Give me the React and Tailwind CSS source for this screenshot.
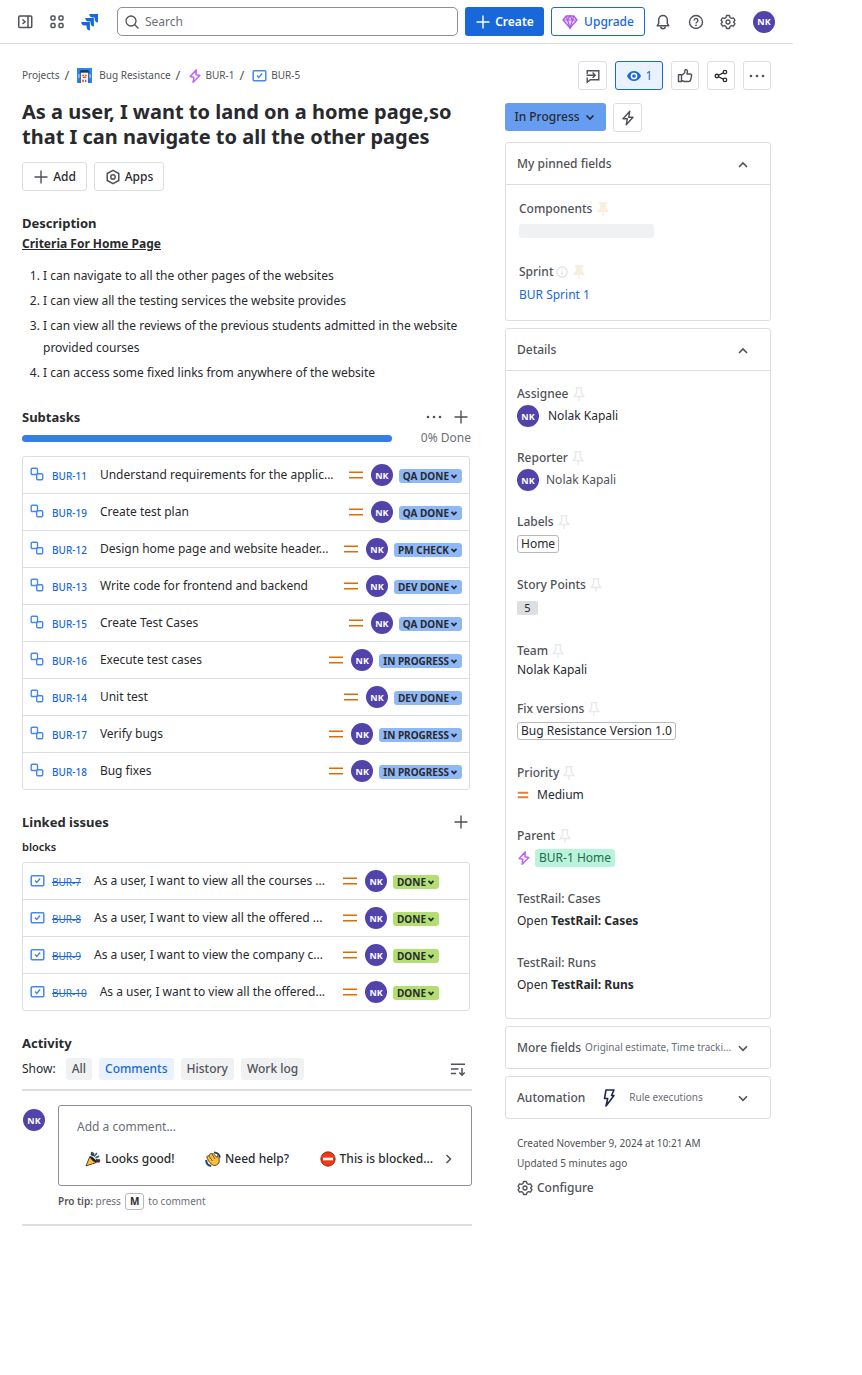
import React from "react";

function Icon({ children, size = "size-4", box = "0 0 16 16", className = "" }) {
  return (
    <svg
      viewBox={box}
      className={`${size} shrink-0 ${className}`}
      fill="none"
      stroke="currentColor"
      strokeWidth="1.5"
      aria-hidden="true"
    >
      {children}
    </svg>
  );
}

const SidebarIcon = () => (
  <Icon>
    <rect x="1.75" y="2" width="13" height="11.5" rx="1" />
    <path d="M11 2v11.5M5.5 5.5 8 7.8 5.5 10" />
  </Icon>
);
const GridIcon = () => (
  <Icon>
    <rect x="2" y="2" width="4" height="4" rx="1.2" />
    <rect x="10" y="2" width="4" height="4" rx="1.2" />
    <rect x="2" y="9.5" width="4" height="4" rx="1.2" />
    <rect x="10" y="9.5" width="4" height="4" rx="1.2" />
  </Icon>
);
const JiraLogo = () => (
  <Icon size="size-[18px]" box="0 0 18 18">
    <g fill="#1868db" stroke="none">
      <path d="M8.200 1H17v8.600c-1.900 0-3.300-1.500-3.300-3.300V4.400h-2.100C9.700 4.400 8.200 2.900 8.200 1Z" />
      <path d="M4.200 5h8.700v8.600c-1.900 0-3.300-1.500-3.300-3.300V8.400H7.500C5.600 8.400 4.200 6.900 4.200 5Z" />
      <path d="M.2 9h8.700v8.600c-1.900 0-3.300-1.500-3.300-3.300v-1.900H3.500C1.600 12.400.2 10.900.2 9Z" />
    </g>
  </Icon>
);
const SearchIcon = () => (
  <Icon>
    <circle cx="7" cy="7" r="5" strokeWidth="1.3" />
    <path d="m10.800 10.800 3.700 3.700" strokeWidth="1.3" />
  </Icon>
);
const PlusIcon = ({ className = "" }) => (
  <Icon className={className}>
    <path d="M8 1.500v13M1.500 8h13" strokeWidth="1.400" />
  </Icon>
);
const GemIcon = () => (
  <Icon className="text-[#af59e0]">
    <path d="M4.200 2h7.600L15 6 8 14 1 6Z" fill="#eed7fc" strokeWidth="1.300" />
    <path d="M1 6h14M4.200 2l1.300 4L8 14l2.500-8 1.300-4M5.500 6 8 2l2.500 4" strokeWidth="1.200" />
  </Icon>
);
const BellIcon = () => (
  <Icon>
    <path d="M2.200 11.800h11.600l-1.500-2.500V5.800a4.300 4.300 0 0 0-8.600 0v3.500Z" strokeLinejoin="round" />
    <path d="M5.800 12.500a2.200 2.200 0 0 0 4.400 0" />
  </Icon>
);
const HelpIcon = () => (
  <Icon>
    <circle cx="8" cy="8" r="6.500" strokeWidth="1.400" />
    <path d="M6.100 6.400a1.900 1.900 0 1 1 2.900 1.600c-.7.400-1 .7-1 1.400" strokeWidth="1.400" />
    <circle cx="8" cy="11.300" r=".9" fill="currentColor" stroke="none" />
  </Icon>
);
const GearIcon = () => (
  <Icon>
    <path
      d="M6.500 1.500h3l.5 2 1.500.9 2-.6 1.500 2.500L13.500 8l1.500 1.700-1.500 2.500-2-.6-1.500.9-.5 2h-3l-.5-2-1.500-.9-2 .6L1 9.700 2.500 8 1 6.300l1.500-2.500 2 .6L6 3.500Z"
      strokeWidth="1.300"
      strokeLinejoin="round"
    />
    <circle cx="8" cy="8" r="2" strokeWidth="1.300" />
  </Icon>
);
const FeedbackIcon = () => (
  <Icon>
    <path d="M2.200 6V2.700h11.600v9H5.300L2.200 14.300V9.500M1.500 7.200H10M7.600 4.600l2.600 2.600-2.600 2.600" strokeWidth="1.400" />
  </Icon>
);
const EyeIcon = () => (
  <Icon size="size-4">
    <path d="M1 8c1.500-3.300 4-5 7-5s5.500 1.700 7 5c-1.500 3.300-4 5-7 5s-5.500-1.700-7-5Z" fill="#1868db" stroke="none" />
    <circle cx="8" cy="8" r="2.600" fill="#1868db" stroke="#fff" strokeWidth="1.500" />
  </Icon>
);
const ThumbIcon = () => (
  <Icon>
    <path
      d="M1.500 6.800h3v6.700h-3ZM4.500 7.500l3-2.500.7-3.300c1.800-.3 2.600.9 2.200 2.300L9.900 6h3.300c1.200 0 1.600.9 1.400 1.800l-1 4.200c-.2.900-.8 1.500-1.800 1.500H7.500l-3-1"
      strokeWidth="1.400"
      strokeLinejoin="round"
    />
  </Icon>
);
const ShareIcon = () => (
  <Icon size="size-[14px]" className="text-[#292a2e]">
    <circle cx="3.300" cy="8" r="2" />
    <circle cx="12.500" cy="3.500" r="2" />
    <circle cx="12.500" cy="12.500" r="2" />
    <path d="m5.200 7.100 5.400-2.700M5.200 8.900l5.400 2.700" />
  </Icon>
);
const DotsIcon = () => (
  <Icon>
    <g fill="currentColor" stroke="none">
      <circle cx="2" cy="8" r="1.300" />
      <circle cx="8" cy="8" r="1.300" />
      <circle cx="14" cy="8" r="1.300" />
    </g>
  </Icon>
);
const BoltIcon = ({ className = "" }) => (
  <Icon className={className}>
    <path d="M9.800 1.200 3 8.800h4.300L6.200 14.800 13 7.200H8.700Z" strokeWidth="1.400" strokeLinejoin="round" />
  </Icon>
);
const EpicIcon = () => (
  <Icon size="size-[14px]" className="text-[#bf63f3]">
    <path d="M9.500 1 2.500 8.500l4.200.9-.9 5.800 7.700-7.700-4.400-1Z" strokeWidth="1.700" strokeLinejoin="round" />
  </Icon>
);
const AutomationIcon = () => (
  <Icon size="size-5" box="0 0 20 20" className="text-[#172b4d]">
    <path d="M7 2h8l-2.500 5.500H15L7 18l1.700-7.500H5.500Z" strokeWidth="1.600" strokeLinejoin="round" />
  </Icon>
);
const StoryIcon = () => (
  <Icon className="text-[#4688ec]">
    <rect x="1.200" y="2.700" width="12.600" height="10" rx="1" />
    <path d="m5 7.600 1.800 1.900 3.300-3.900" />
  </Icon>
);
const SubtaskIcon = () => (
  <Icon className="text-[#4688ec]">
    <rect x="1.200" y="1.200" width="6.300" height="6.300" rx="1" strokeWidth="1.400" />
    <rect x="6.700" y="6.700" width="6" height="6" rx="1" strokeWidth="1.400" />
  </Icon>
);
const AppsIcon = () => (
  <Icon>
    <path d="M8 1.300 13.800 4.500v7L8 14.700 2.200 11.500v-7Z" strokeLinejoin="round" />
    <circle cx="8" cy="8" r="2.200" />
  </Icon>
);
const ChevronDown = ({ size = "size-4", w = 1.6 }) => (
  <Icon size={size}>
    <path d="m4 6.300 4 4 4-4" strokeWidth={w} />
  </Icon>
);
const ChevronUp = () => (
  <Icon>
    <path d="m4 11 4-4 4 4" strokeWidth="1.600" />
  </Icon>
);
const ChevronRight = () => (
  <Icon className="text-[#505258]">
    <path d="m5.500 4 4 4-4 4" />
  </Icon>
);
const SortIcon = () => (
  <Icon>
    <path d="M1 3.300h14M1 8h7.500M1 12.500h5M12 7v7M9.300 11.500 12 14.200l2.700-2.700" />
  </Icon>
);
const InfoIcon = () => (
  <Icon size="size-3" className="text-[#dddee1]">
    <circle cx="8" cy="8" r="6.800" />
    <path d="M8 7v5M8 4v1.600" />
  </Icon>
);
const PinOutline = () => (
  <Icon className="text-[#e9eaec]">
    <path d="M4.500 1.700h7M5.700 1.700v5L3.200 10.500h9.600l-2.500-3.800v-5M8 10.500V15" strokeWidth="1.400" />
  </Icon>
);
const PinSolid = () => (
  <Icon className="text-[#f7efe0]">
    <path d="M4 1h8v1.800l-1 .6v3.500l2.500 2.600V11H2.500V9.500L5 6.900V3.400l-1-.6Z" fill="currentColor" stroke="none" />
    <path d="M8 10.500V15" />
  </Icon>
);
const Medium = () => (
  <Icon className="text-[#e06c00]">
    <path d="M1 5.200h14M1 10.800h14" strokeWidth="1.500" />
  </Icon>
);

const ProjectAvatar = () => (
  <svg viewBox="0 0 16 16" className="size-[15px] shrink-0" aria-hidden="true">
    <rect width="16" height="16" fill="#2684ff" />
    <rect x="1" y="6" width="14" height="5" rx="2" fill="#8fbcff" />
    <path d="M3 4Q3 2 5 2h6q2 0 2 2v12H3Z" fill="#253858" />
    <path d="M4 5h8v11H4Z" fill="#f4f5f7" />
    <rect x="5" y="6" width="6" height="5" rx="2" fill="#ffd5cc" />
    <circle cx="6.500" cy="7.800" r=".7" fill="#253858" />
    <circle cx="9.500" cy="7.800" r=".7" fill="#253858" />
    <path d="M6.500 9.300h3v1.200h-3Z" fill="#de350b" />
    <path d="M5.500 12.500h2V15h-2Z" fill="#ff5630" />
    <path d="M8.500 12.500h1.500V15H8.500Z" fill="#2684ff" />
  </svg>
);
const PartyIcon = () => (
  <svg viewBox="0 0 16 16" className="size-4 shrink-0" aria-hidden="true">
    <path d="M6.500 1 9 2.500 8.500 5 6 4Z" fill="#1d4f6e" stroke="#222" strokeWidth=".7" />
    <path d="m11 8.500 4 .3-.8 2.500-3.700-.5Z" fill="#7c1f1f" stroke="#222" strokeWidth=".7" />
    <path d="m9 5.500 3-3.500M10.500 7l3.500-2" stroke="#2a5f80" strokeWidth="1.500" />
    <path d="m1 15 3.800-9.500 6.500 6Z" fill="#fdbf3a" stroke="#222" strokeWidth=".8" strokeLinejoin="round" />
    <path d="M4.800 5.500c1.500-1.500 7.500 4 6.500 6-2 .5-6.500-4-6.500-6Z" fill="#222" />
  </svg>
);
const WaveIcon = () => (
  <svg viewBox="0 0 16 16" className="size-4 shrink-0" aria-hidden="true">
    <path d="M9 1.500c3 0 5.500 2 5.800 5M1.200 9c0 3 2 5.500 5 6" fill="none" stroke="#234a5c" strokeWidth="2" />
    <path
      d="M2 5.500C2.500 4.500 3.500 4.500 4 5L5 3c1-1 1.800-.4 2 0 .8-.8 1.600-.3 2 .2L12 6.500l.3-1.800c1-.7 1.700 0 1.700.8l.2 4.500c0 3-3.500 5.500-6.500 4C5.500 13 3.500 10 2 7Z"
      fill="#fdbf3a"
      stroke="#3b2a10"
      strokeWidth=".8"
    />
    <path d="m4 5 3.500 5M7 3l3 5" stroke="#3b2a10" strokeWidth=".7" />
  </svg>
);
const BlockedIcon = () => (
  <svg viewBox="0 0 16 16" className="size-4 shrink-0" aria-hidden="true">
    <circle cx="8" cy="8" r="7.200" fill="#f03a17" stroke="#7c1c0a" strokeWidth=".8" />
    <rect x="3" y="6.700" width="10" height="2.600" fill="#fff" />
  </svg>
);

function Avatar() {
  return (
    <span className="flex size-[22px] shrink-0 items-center justify-center rounded-full bg-[#5243aa] text-[9px] font-bold leading-none text-white">
      NK
    </span>
  );
}

const boxButton =
  "flex h-[29px] items-center justify-center rounded-[3px] border border-[#dddee1] bg-white text-[#505258]";

function IssueRow({ id, title, status, done }) {
  return (
    <li className={`box-content flex h-9 items-center border-b border-[#dddee1] pl-[7px] last:border-b-0 ${done ? "pr-[30px]" : "pr-[7px]"}`}>
      {done ? <StoryIcon /> : <SubtaskIcon />}
      <a
        href="#issue"
        className={`ml-[6px] mr-[13px] shrink-0 pt-[2px] text-[10px] text-[#1868db] ${done ? "line-through" : "font-medium"}`}
      >
        {id}
      </a>
      <span className="min-w-0 flex-1 whitespace-nowrap text-[12px]">{title}</span>
      <Medium />
      <span className="ml-[7px] mr-[6px]">
        <Avatar />
      </span>
      <button
        className={`mt-[2px] flex h-[14px] shrink-0 items-center rounded-[3px] pl-1 pr-[3px] text-[10px] font-bold leading-none text-[#292a2e] ${done ? "bg-[#b3df72]" : "bg-[#8fb8f6]"}`}
      >
        {status}
        <ChevronDown size="size-[10px]" w={2.8} />
      </button>
    </li>
  );
}

function IssueList({ items, done }) {
  return (
    <ul className="mr-[2px] rounded-[3px] border border-[#dddee1]">
      {items.map(([id, title, status]) => (
        <IssueRow key={id} id={id} title={title} status={status} done={done} />
      ))}
    </ul>
  );
}

const subtasks = [
  ["BUR-11", "Understand requirements for the applic...", "QA DONE"],
  ["BUR-19", "Create test plan", "QA DONE"],
  ["BUR-12", "Design home page and website header...", "PM CHECK"],
  ["BUR-13", "Write code for frontend and backend", "DEV DONE"],
  ["BUR-15", "Create Test Cases", "QA DONE"],
  ["BUR-16", "Execute test cases", "IN PROGRESS"],
  ["BUR-14", "Unit test", "DEV DONE"],
  ["BUR-17", "Verify bugs", "IN PROGRESS"],
  ["BUR-18", "Bug fixes", "IN PROGRESS"],
];
const linked = [
  ["BUR-7", "As a user, I want to view all the courses ...", "DONE"],
  ["BUR-8", "As a user, I want to view all the offered ...", "DONE"],
  ["BUR-9", "As a user, I want to view the company c...", "DONE"],
  ["BUR-10", "As a user, I want to view all the offered...", "DONE"],
];

function Header() {
  return (
    <header className="flex h-11 items-center border-b border-[#dddee1] pl-[17px] pr-[18px] text-[#505258]">
      <button aria-label="Expand sidebar"><SidebarIcon /></button>
      <button aria-label="Switch apps" className="ml-4"><GridIcon /></button>
      <a href="#home" aria-label="Jira" className="ml-4"><JiraLogo /></a>
      <label className="ml-[18px] flex h-[29px] min-w-0 flex-1 items-center gap-[5px] rounded-[5px] border border-[#8c8f97] px-[6px]">
        <SearchIcon />
        <input
          type="search"
          aria-label="Search"
          placeholder="Search"
          className="min-w-0 flex-1 bg-transparent text-[12px] outline-none placeholder:text-[#6b6e76]"
        />
      </label>
      <button className="ml-[7px] flex h-[29px] w-[79px] items-center justify-center gap-1 rounded-[3px] bg-[#1868db] text-[12px] font-semibold text-white">
        <PlusIcon />
        Create
      </button>
      <button className="ml-[7px] flex h-[29px] w-[94px] items-center justify-center gap-[6px] rounded-[3px] border border-[#1868db] text-[12px] font-medium text-[#1868db]">
        <GemIcon />
        Upgrade
      </button>
      <button aria-label="Notifications" className="ml-[10px]"><BellIcon /></button>
      <button aria-label="Help" className="ml-[17px]"><HelpIcon /></button>
      <button aria-label="Settings" className="ml-4"><GearIcon /></button>
      <button aria-label="Account" className="ml-[17px]"><Avatar /></button>
    </header>
  );
}

function Slash() {
  return <span className="ml-[5px] mr-2 text-[13px]">/</span>;
}

function Breadcrumbs() {
  return (
    <nav aria-label="Breadcrumbs" className="flex h-[29px] items-center whitespace-nowrap text-[10px] text-[#505258]">
      <a href="#projects">Projects</a>
      <Slash />
      <a href="#project" className="flex items-center gap-[7px]"><ProjectAvatar />Bug Resistance</a>
      <Slash />
      <a href="#epic" className="flex items-center gap-[3px]"><EpicIcon />BUR-1</a>
      <Slash />
      <a href="#story" className="flex items-center gap-[3px]"><StoryIcon />BUR-5</a>
    </nav>
  );
}

const h2 = "text-[13px] font-bold leading-5";

function Activity() {
  return (
    <section>
      <h2 className={`${h2} mt-[22px]`}>Activity</h2>
      <div className="mt-[5px] flex h-[22px] items-center text-[12px]">
        <span className="mr-[10px]">Show:</span>
        <div className="flex flex-1 gap-[7px] font-medium text-[#505258]">
          <button className="h-[22px] rounded-[3px] bg-[#f0f1f2] px-[6px]">All</button>
          <button className="h-[22px] rounded-[3px] bg-[#e9f2fe] px-[6px] text-[#1868db]">Comments</button>
          <button className="h-[22px] rounded-[3px] bg-[#f0f1f2] px-[6px]">History</button>
          <button className="h-[22px] rounded-[3px] bg-[#f0f1f2] px-[6px]">Work log</button>
        </div>
        <button aria-label="Sort" className="mr-[6px] text-[#505258]"><SortIcon /></button>
      </div>
      <div className="mt-[9px] border-t-2 border-[#dddee1] pt-[14px]">
        <div className="flex gap-[13px]">
          <div className="ml-px pt-1"><Avatar /></div>
          <div className="min-w-0 flex-1">
            <div className="h-[81px] rounded-[3px] border border-[#8c8f97]">
              <input
                type="text"
                aria-label="Add a comment"
                placeholder="Add a comment..."
                className="mt-[10px] block h-5 w-full px-[18px] text-[12px] outline-none placeholder:text-[#6b6e76]"
              />
              <div className="mt-[14px] flex items-center justify-between pl-[26px] pr-[14px] text-[12px] font-medium">
                <button className="flex items-center gap-1"><PartyIcon />Looks good!</button>
                <button className="flex items-center gap-1"><WaveIcon />Need help?</button>
                <span className="flex items-center gap-2">
                  <button className="flex items-center gap-1"><BlockedIcon />This is blocked...</button>
                  <button aria-label="More suggestions"><ChevronRight /></button>
                </span>
              </div>
            </div>
            <p className="mt-[6px] flex h-[18px] items-center gap-1 text-[10px] text-[#6b6e76]">
              <span><b className="font-semibold text-[#505258]">Pro tip:</b> press</span>
              <kbd className="flex h-[17px] items-center rounded-[3px] border border-[#b7b9be] px-1 font-sans text-[10px] font-bold text-[#292a2e]">M</kbd>
              to comment
            </p>
          </div>
        </div>
      </div>
      <div className="mt-[14px] border-t-2 border-[#dddee1]" />
    </section>
  );
}

function Field({ label, pin = true, children, valueClass = "h-6" }) {
  return (
    <div>
      <dt className="flex h-5 items-center gap-[2px] text-[12px] font-medium text-[#505258]">
        {label}
        {pin && <PinOutline />}
      </dt>
      <dd className={`flex items-center text-[12px] ${valueClass}`}>{children}</dd>
    </div>
  );
}

function Panel({ title, children }) {
  return (
    <section className="rounded-[3px] border border-[#dddee1]">
      <h2 className="flex h-[42px] items-center justify-between border-b border-[#dddee1] pl-[11px] pr-[19px] text-[12px] font-medium text-[#505258]">
        {title}
        <button aria-label={`Collapse ${title}`}><ChevronUp /></button>
      </h2>
      {children}
    </section>
  );
}

function Sidebar() {
  const tag = "rounded-[3px] border border-[#b7b9be] px-[3px] leading-4";
  return (
    <aside className="w-[266px] shrink-0">
      <div className="flex justify-end gap-2">
        <button aria-label="Give feedback" className={`${boxButton} w-[29px]`}><FeedbackIcon /></button>
        <button aria-label="Watchers" className="flex h-[29px] w-12 items-center justify-center gap-1 rounded-[3px] border border-[#1868db] bg-[#e9f2fe] text-[12px] text-[#1868db]">
          <EyeIcon />1
        </button>
        <button aria-label="Like" className={`${boxButton} w-7`}><ThumbIcon /></button>
        <button aria-label="Share" className={`${boxButton} w-7`}><ShareIcon /></button>
        <button aria-label="Actions" className={`${boxButton} w-7`}><DotsIcon /></button>
      </div>
      <div className="mt-[13px] flex gap-[7px]">
        <button className="flex h-7 w-[101px] items-center justify-center gap-[3px] rounded-[3px] bg-[#669df1] text-[12px] font-medium text-[#292a2e]">
          In Progress
          <ChevronDown size="size-[14px]" w={1.9} />
        </button>
        <button aria-label="Automation" className={`${boxButton} w-[29px]`}><BoltIcon /></button>
      </div>
      <div className="mt-[10px] flex flex-col gap-[7px]">
        <Panel title="My pinned fields">
          <div className="px-[13px] pb-[13px] pt-[14px] text-[12px]">
            <div className="flex h-5 items-center gap-[3px] font-medium text-[#505258]">Components<PinSolid /></div>
            <div className="mt-[5px] h-[14px] w-[135px] rounded-[3px] bg-[#f0f1f2]" />
            <div className="mt-6 flex h-5 items-center gap-[3px] font-medium text-[#505258]">Sprint<InfoIcon /><PinSolid /></div>
            <a href="#sprint" className="mt-px flex h-6 items-center text-[#1868db]">BUR Sprint 1</a>
          </div>
        </Panel>
        <Panel title="Details">
          <dl className="flex flex-col gap-5 px-[11px] pb-[21px] pt-[13px]">
            <Field label="Assignee" valueClass="h-6 gap-[9px]"><Avatar />Nolak Kapali</Field>
            <Field label="Reporter" valueClass="h-6 gap-[7px] text-[#505258]"><Avatar />Nolak Kapali</Field>
            <Field label="Labels" valueClass="h-[23px]"><span className={tag}>Home</span></Field>
            <Field label="Story Points" valueClass="h-[26px]">
              <span className="flex h-[14px] w-[21px] items-center justify-center rounded-[2px] bg-[#dddee1] text-[11px]">5</span>
            </Field>
            <Field label="Team" valueClass="h-[18px]">Nolak Kapali</Field>
            <Field label="Fix versions"><span className={tag}>Bug Resistance Version 1.0</span></Field>
            <Field label="Priority" valueClass="h-[23px] gap-2">
              <Icon size="size-3" className="text-[#e97f33]"><path d="M1 5h14M1 11h14" strokeWidth="2.8" /></Icon>
              Medium
            </Field>
            <Field label="Parent" valueClass="h-[23px] gap-1">
              <EpicIcon />
              <a href="#epic" className="rounded-[3px] bg-[#baf3db] px-1 leading-[18px] text-[#216e4e]">BUR-1 Home</a>
            </Field>
            <Field label="TestRail: Cases" pin={false}><a href="#cases">Open <b>TestRail: Cases</b></a></Field>
            <Field label="TestRail: Runs" pin={false}><a href="#runs">Open <b>TestRail: Runs</b></a></Field>
          </dl>
        </Panel>
        <button className="flex h-[43px] items-center rounded-[3px] border border-[#dddee1] pl-[11px] pr-[19px] text-left text-[#505258]">
          <span className="shrink-0 text-[12px] font-medium">More fields</span>
          <span className="ml-1 flex-1 whitespace-nowrap text-[10px] text-[#6b6e76]">Original estimate, Time tracki...</span>
          <ChevronDown />
        </button>
        <button className="flex h-[43px] items-center rounded-[3px] border border-[#dddee1] pl-[11px] pr-[19px] text-left text-[#505258]">
          <span className="text-[12px] font-medium">Automation</span>
          <span className="ml-[14px]"><AutomationIcon /></span>
          <span className="ml-[10px] flex-1 text-[10px] text-[#6b6e76]">Rule executions</span>
          <ChevronDown />
        </button>
      </div>
      <div className="mt-[14px] pl-3 text-[10px] leading-5 text-[#505258]">
        <p>Created November 9, 2024 at 10:21 AM</p>
        <p>Updated 5 minutes ago</p>
        <button className="mt-[5px] flex items-center gap-1 text-[12px] font-medium"><GearIcon />Configure</button>
      </div>
    </aside>
  );
}

export default function App() {
  return (
    <div className="min-h-screen bg-white font-['Noto_Sans',sans-serif] text-[#292a2e]">
      <div className="w-full max-w-[793px]">
        <Header />
        <div className="flex items-start gap-[33px] pl-[22px] pr-[22px] pt-[17px]">
          <main className="min-w-0 flex-1">
            <Breadcrumbs />
            <h1 className="mt-[9px] whitespace-nowrap text-[20px] font-bold leading-[25px]">
              As a user, I want to land on a home page,so
              <br />
              that I can navigate to all the other pages
            </h1>
            <div className="mt-[13px] flex gap-[7px] text-[12px] font-medium">
              <button className={`${boxButton} w-[65px] gap-1`}><PlusIcon /><span className="text-[#292a2e]">Add</span></button>
              <button className={`${boxButton} w-[70px] gap-1`}><AppsIcon /><span className="text-[#292a2e]">Apps</span></button>
            </div>

            <h2 className={`${h2} mt-[22px]`}>Description</h2>
            <p className="mt-px text-[12px] font-bold leading-5 underline">Criteria For Home Page</p>
            <ol className="mt-[11px] flex list-outside list-decimal flex-col gap-[3px] pl-[21px] text-[12px] leading-[22px]">
              <li>I can navigate to all the other pages of the websites</li>
              <li>I can view all the testing services the website provides</li>
              <li>I can view all the reviews of the previous students admitted in the website provided courses</li>
              <li>I can access some fixed links from anywhere of the website</li>
            </ol>

            <div className="mt-[23px] flex items-center text-[#505258]">
              <h2 className={`${h2} flex-1 text-[#292a2e]`}>Subtasks</h2>
              <button aria-label="Subtask actions" className="mr-[11px]"><DotsIcon /></button>
              <button aria-label="Create subtask" className="mr-[3px]"><PlusIcon /></button>
            </div>
            <div className="mt-[2px] flex h-[18px] items-center justify-between pr-px text-[12px] text-[#6b6e76]">
              <div role="progressbar" aria-label="Subtasks done" className="mr-[29px] h-[7px] flex-1 rounded-full bg-[#357de8]" />
              0% Done
            </div>
            <div className="mt-[9px]"><IssueList items={subtasks} /></div>

            <div className="mt-[22px] flex items-center text-[#505258]">
              <h2 className={`${h2} flex-1 text-[#292a2e]`}>Linked issues</h2>
              <button aria-label="Link issue" className="mr-[3px]"><PlusIcon /></button>
            </div>
            <h3 className="mb-[5px] mt-[5px] text-[11px] font-semibold leading-5">blocks</h3>
            <IssueList items={linked} done />

            <Activity />
          </main>
          <Sidebar />
        </div>
      </div>
    </div>
  );
}
